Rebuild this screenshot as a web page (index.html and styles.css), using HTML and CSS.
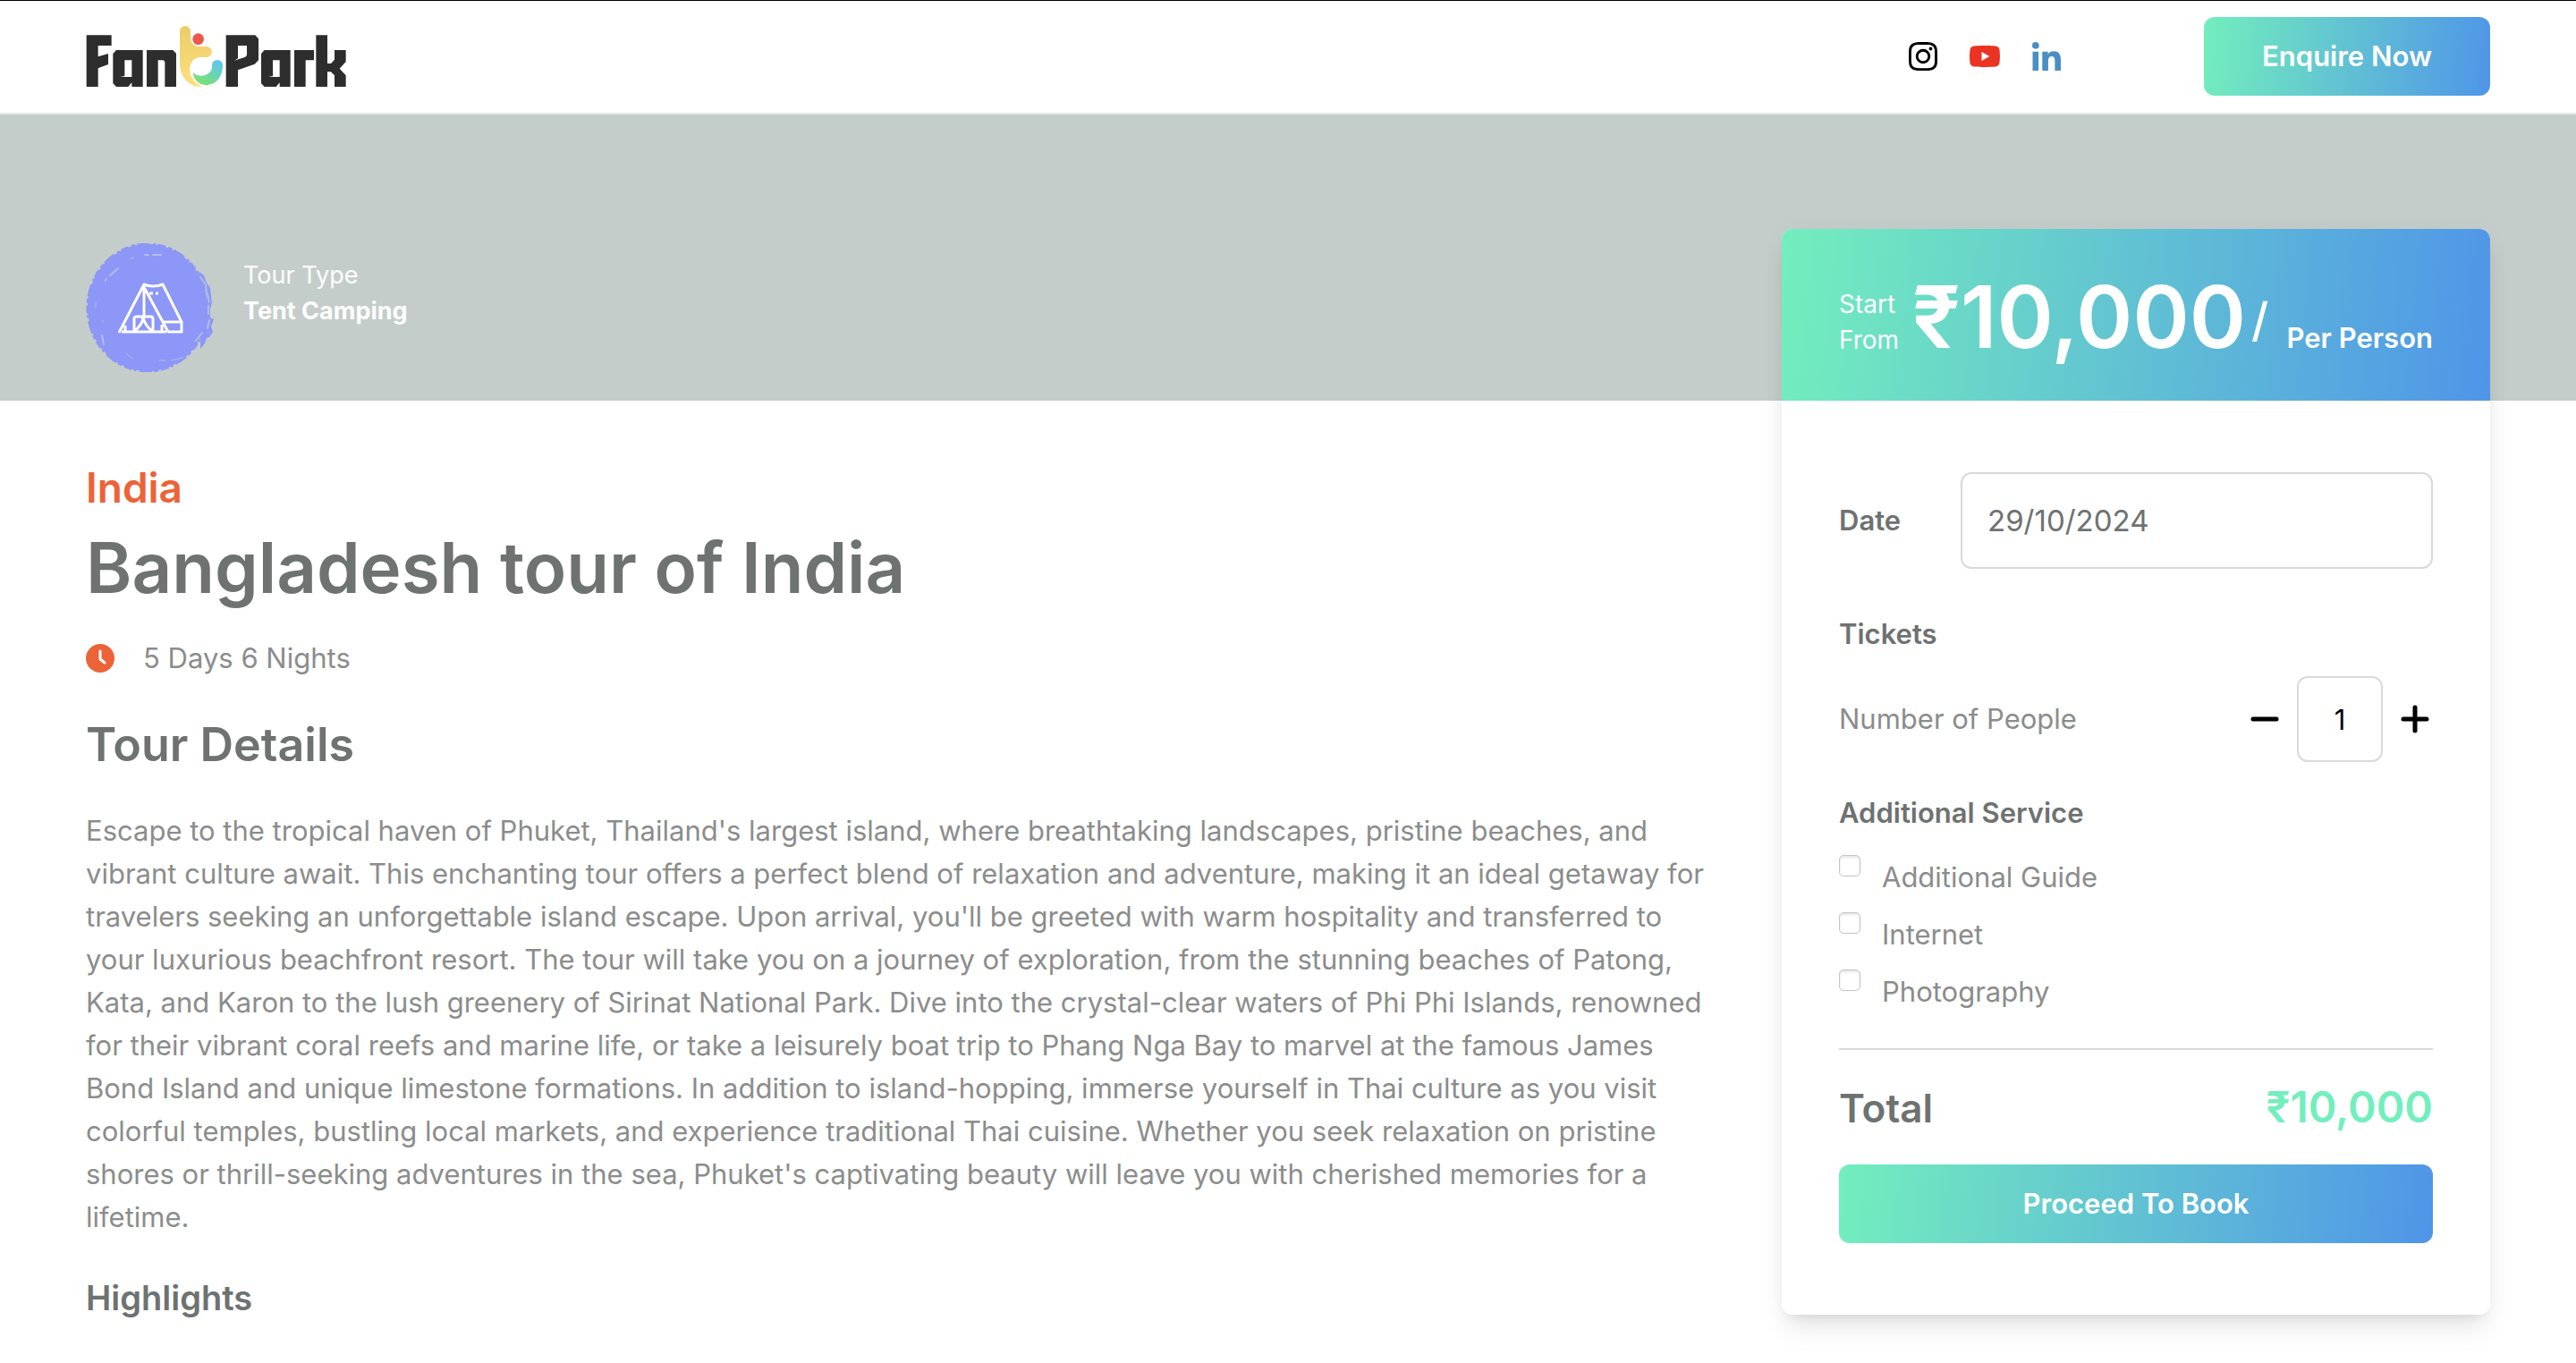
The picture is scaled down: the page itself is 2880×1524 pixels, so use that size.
FILE: index.html
```html
<!DOCTYPE html>
<html lang="en">
<head>
<meta charset="utf-8">
<meta name="viewport" content="width=device-width, initial-scale=1">
<title>Bangladesh tour of India – FantPark</title>
<link rel="stylesheet" href="styles.css">
</head>
<body>
<header class="site-header">
  <a class="logo" href="#" aria-label="FantPark home">
    <svg class="logo-mark" viewBox="48 84 876 210" role="img" aria-label="FantPark">
      <defs>
        <linearGradient id="sun" x1="0" y1="0" x2="0" y2="1"><stop offset="0" stop-color="#ebcd68"/><stop offset="1" stop-color="#fce080"/></linearGradient>
        <linearGradient id="sea" x1="1" y1="0" x2="0.3" y2="1"><stop offset="0.1" stop-color="#5cc6f0"/><stop offset="0.9" stop-color="#77e07b"/></linearGradient>
      </defs>
      <g fill="#2d2d2d" fill-rule="evenodd">
        <path d="M50 118H134V153H89V190L123 180V216L89 229V291H50Z"/>
        <path d="M150 168H239V291H202V277L190 291H150L139 280V180ZM178 202V255L163 258H202V202Z"/>
        <path d="M252 168H340L351 179V291H313V207L308 202H290V291H252Z"/>
        <path d="M518 118H616L627 130V202L614 215L558 235V291H518ZM558 153V196L546 203L583 191L588 185V153Z"/>
        <path d="M647 168H734V291H698V277L686 291H647L636 280V180ZM675 202V255L660 258H698V202Z"/>
        <path d="M747 168H813V202H785V291H747Z"/>
        <path d="M820 118H858V213H870L882 200V168H920V207L899 230L920 253V291H882V253L870 241H858V291H820Z"/>
      </g>
      <path d="M363 105a18 18 0 0 1 36 0V128C401 144 412 156 430 156H453a18 18 0 0 1 0 36H432C398 192 388 235 405 262C415 277 426 287 440 289C400 297 363 260 363 215Z" fill="url(#sun)"/>
      <circle cx="425" cy="131" r="19" fill="#ec574e"/>
      <path d="M407 242C420 258 445 257 458 247C470 239 471 232 471 219C471 196 507 196 507 219C507 258 485 285 452 285C425 285 409 265 407 242Z" fill="url(#sea)"/>
    </svg>
  </a>
  <nav class="header-actions" aria-label="Social and contact">
    <div class="social">
      <a href="#" aria-label="Instagram"><svg viewBox="0 0 448 448"><path d="M224 109a115 115 0 1 0 0 230 115 115 0 0 0 0-230zm0 190a75 75 0 1 1 0-150 75 75 0 0 1 0 150zm146-194a27 27 0 1 1-54 0 27 27 0 0 1 54 0zm76 27c-2-36-10-68-36-94S352 4 316 2c-37-2-148-2-185 0C95 4 64 12 37 38S3 96 2 132c-2 37-2 148 0 185 2 36 10 68 36 94s58 34 94 36c37 2 148 2 185 0 36-2 68-10 94-36s34-58 36-94c2-37 2-148-1-185zm-48 225a76 76 0 0 1-43 43c-29 12-99 9-131 9s-102 2-131-9a76 76 0 0 1-43-43c-12-29-9-99-9-131s-2-102 9-131a76 76 0 0 1 43-43c29-12 99-9 131-9s102-2 131 9a76 76 0 0 1 43 43c12 29 9 99 9 131s3 102-9 131z"/></svg></a>
      <a class="social-wide" href="#" aria-label="YouTube"><svg viewBox="14 16 548 480"><path fill="#ea3323" d="M550 124c-6-24-25-42-49-49-42-11-213-11-213-11S117 64 75 75c-24 7-43 25-49 49-11 43-11 132-11 132s0 90 11 133c6 23 25 41 49 48 42 11 213 11 213 11s171 0 213-11c24-7 43-25 49-48 11-43 11-133 11-133s0-89-11-132z"/><path fill="#fff" d="M232 338V175l143 81z"/></svg></a>
      <a href="#" aria-label="LinkedIn"><svg viewBox="0 0 448 448"><path fill="#4a8fc1" d="M100 448H7V149h93zM54 108A54 54 0 1 1 54 0a54 54 0 0 1 0 108zm394 340h-93V302c0-34-1-79-48-79-49 0-56 38-56 77v148h-93V149h89v41h1c13-24 43-48 88-48 94 0 112 62 112 142z"/></svg></a>
    </div>
    <button class="btn btn-enquire" type="button">Enquire Now</button>
  </nav>
</header>

<section class="hero">
  <svg class="tour-badge" viewBox="0 0 144 144" aria-hidden="true">
    <g fill="#8c97f7">
      <ellipse cx="69" cy="72" rx="67" ry="71"/>
      <path d="M127 32l5 4 3 8 4 6 1 9 1 8-2 6v10l4 2-3 8 2 6-4 6-3 1-2 6-5 6z"/>
    </g>
    <ellipse cx="69" cy="72" rx="67" ry="71" fill="none" stroke="#8c97f7" stroke-width="3" stroke-dasharray="9 3 5 2 14 4 3 2"/>
    <g fill="none" stroke="#b3bce4" stroke-width="2" stroke-linecap="round" stroke-linejoin="round">
      <path d="M66 13h4M75 13h9M27 36l9-8M22 42l1-2M128 38l6 8l1 10l3 10M134 52l3 8M137 70v9M138 86l-2 9M130 100l-7 9M18 103l2 10"/>
      <path stroke-width="1" d="M45 123l8 7M82 131h7M96 131l12-3M11 66v6M19 86v2M50 17l4-1"/>
    </g>
    <g fill="none" stroke="#fff" stroke-width="3" stroke-linejoin="round">
      <path d="M37 100L65 46Q75 50 86 46L107 88V99H92L65 49V83M40 99H90M44 92V99M54 99V84Q54 82 57 82H73Q75 82 75 85V99M54 98Q63 92 64 83Q66 92 75 99M85 88H106M85 91V98"/>
      <path d="M71 56H75M78 56H81"/>
    </g>
  </svg>
  <div class="tour-type">
    <span>Tour Type</span>
    <strong>Tent Camping</strong>
  </div>
</section>

<main class="page">
  <article class="tour">
    <p class="country">India</p>
    <h1>Bangladesh tour of India</h1>
    <p class="duration">
      <svg viewBox="0 0 32 32" aria-hidden="true"><circle cx="16" cy="16" r="16" fill="#ec6337"/><path d="M16 8V17L21 21" fill="none" stroke="#fff" stroke-width="3" stroke-linecap="round" stroke-linejoin="round"/></svg>
      5 Days 6 Nights
    </p>
    <h2>Tour Details</h2>
    <p class="description">Escape to the tropical haven of Phuket, Thailand's largest island, where breathtaking landscapes, pristine beaches, and vibrant culture await. This enchanting tour offers a perfect blend of relaxation and adventure, making it an ideal getaway for travelers seeking an unforgettable island escape. Upon arrival, you'll be greeted with warm hospitality and transferred to your luxurious beachfront resort. The tour will take you on a journey of exploration, from the stunning beaches of Patong, Kata, and Karon to the lush greenery of Sirinat National Park. Dive into the crystal-clear waters of Phi Phi Islands, renowned for their vibrant coral reefs and marine life, or take a leisurely boat trip to Phang Nga Bay to marvel at the famous James Bond Island and unique limestone formations. In addition to island-hopping, immerse yourself in Thai culture as you visit colorful temples, bustling local markets, and experience traditional Thai cuisine. Whether you seek relaxation on pristine shores or thrill-seeking adventures in the sea, Phuket's captivating beauty will leave you with cherished memories for a lifetime.</p>
    <h3>Highlights</h3>
  </article>

  <form class="booking">
    <div class="price">
      <span class="price-from">Start From</span>
      <span class="price-amount">₹10,000</span>
      <span class="price-slash">/</span>
      <span class="price-unit">Per Person</span>
    </div>
    <div class="booking-body">
      <div class="date-row">
        <label for="date">Date</label>
        <input id="date" type="text" value="29/10/2024">
      </div>
      <h4 class="tickets">Tickets</h4>
      <div class="people-row">
        <label for="people">Number of People</label>
        <div class="stepper">
          <button type="button" aria-label="Fewer people"><svg viewBox="0 0 32 32"><path d="M3 16H29"/></svg></button>
          <input id="people" type="text" inputmode="numeric" value="1">
          <button type="button" aria-label="More people"><svg viewBox="0 0 32 32"><path d="M3 16H29M16 3V29"/></svg></button>
        </div>
      </div>
      <fieldset class="services">
        <legend>Additional Service</legend>
        <label><input type="checkbox"><span>Additional Guide</span></label>
        <label><input type="checkbox"><span>Internet</span></label>
        <label><input type="checkbox"><span>Photography</span></label>
      </fieldset>
      <div class="total">
        <span>Total</span>
        <output>₹10,000</output>
      </div>
      <button class="btn btn-book" type="submit">Proceed To Book</button>
    </div>
  </form>
</main>
</body>
</html>
```
FILE: styles.css
```css
:root {
  --ink: #6e7271;
  --muted: #8b8d8c;
  --line: #d9d9d9;
  --mint: #73eebd;
  --blue: #4f95e8;
  --gutter: 96px;
}

* { box-sizing: border-box; margin: 0; }

body {
  background: #fff;
  color: var(--muted);
  font: 400 31px/48px Inter, sans-serif;
  overflow-x: hidden;
}

a { color: inherit; text-decoration: none; }
svg { display: block; }
button, input { font: inherit; }
button { border: 0; background: none; padding: 0; cursor: pointer; }

.site-header {
  display: flex;
  align-items: center;
  justify-content: space-between;
  height: 128px;
  padding: 0 var(--gutter);
  border-bottom: 2px solid #e5e7eb;
  box-shadow: inset 0 1px #000;
}
.logo-mark { width: 292px; height: 70px; }
.header-actions { display: flex; align-items: center; gap: 160px; }
.social { display: flex; align-items: center; gap: 36px; }
.social svg { width: 32px; height: 32px; }
.social .social-wide svg { width: 34px; }

.btn {
  height: 88px;
  border-radius: 12px;
  background: linear-gradient(96deg, var(--mint), var(--blue));
  color: #fff;
  font-weight: 600;
}
.btn-enquire { width: 320px; }

.hero {
  display: flex;
  gap: 32px;
  height: 320px;
  padding: 144px var(--gutter) 0;
  background: #c5cdca;
  color: #fff;
}
.tour-badge { width: 144px; height: 144px; }
.tour-type {
  display: flex;
  flex-direction: column;
  padding-top: 16px;
  font-size: 27px;
  line-height: 40px;
}
.tour-type strong { font-weight: 700; }

.page {
  display: grid;
  grid-template-columns: 1fr 792px;
  align-items: start;
  gap: 72px;
  padding: 0 var(--gutter);
}

.tour { padding-top: 65px; }
h1, h2, h3, h4, .country { color: var(--ink); font-weight: 600; }
.country { color: #ec6337; font-size: 46px; line-height: 64px; }
h1 { font-size: 78px; line-height: 96px; margin-top: 10px; }
.duration { display: flex; align-items: center; gap: 32px; margin-top: 29px; }
.duration svg { width: 32px; height: 32px; }
h2 { font-size: 52px; line-height: 72px; margin-top: 37px; }
.description { margin-top: 36px; }
h3 { font-size: 38px; line-height: 56px; margin-top: 38px; }

.booking {
  margin: -192px 0 48px;
  border-radius: 12px;
  background: #fff;
  box-shadow: 0 20px 30px -6px rgb(0 0 0 / 10%), 0 8px 12px -8px rgb(0 0 0 / 10%), 0 0 30px rgb(0 0 0 / 3%);
}
.price {
  display: flex;
  align-items: baseline;
  height: 192px;
  padding: 50px 64px 0;
  border-radius: 12px 12px 0 0;
  background: linear-gradient(96deg, var(--mint), var(--blue));
  color: #fff;
  line-height: 96px;
}
.price-from { align-self: flex-start; width: 82px; padding-top: 14px; font-size: 28px; line-height: 40px; }
.price-amount { font-size: 96px; font-weight: 600; }
.price-slash { align-self: flex-start; margin-left: 6px; font-size: 52px; font-weight: 500; line-height: 104px; }
.price-unit { margin-left: auto; font-weight: 600; }

.booking-body { padding: 80px 64px; }
.date-row { display: flex; align-items: center; justify-content: space-between; }
.date-row label { color: var(--ink); font-weight: 600; }
.date-row input {
  width: 528px;
  height: 108px;
  padding: 0 28px;
  border: 2px solid var(--line);
  border-radius: 12px;
  background: #fff;
  color: var(--ink);
  font-size: 33px;
}
.tickets { margin-top: 49px; font-size: 31px; }
.people-row { display: flex; align-items: center; justify-content: space-between; margin-top: 23px; }
.stepper { display: flex; align-items: center; gap: 20px; padding-right: 4px; }
.stepper input {
  width: 96px;
  height: 96px;
  padding: 0;
  border: 2px solid var(--line);
  border-radius: 12px;
  color: #000;
  text-align: center;
}
.stepper svg { width: 32px; height: 32px; stroke: #000; stroke-width: 5; stroke-linecap: round; }

.services { margin-top: 33px; padding: 0; border: 0; }
.services legend { padding: 0; margin-bottom: 23px; color: var(--ink); font-weight: 600; }
.services label { display: flex; align-items: flex-start; gap: 24px; height: 64px; }
.services input {
  appearance: none;
  width: 24px;
  height: 24px;
  margin: 0;
  border: 1px solid #c4c4c4;
  border-radius: 5px;
  background: #fff;
  box-shadow: inset 0 2px 3px rgb(0 0 0 / 10%);
}
.services span { line-height: 50px; }

.total {
  display: flex;
  align-items: baseline;
  justify-content: space-between;
  height: 98px;
  margin-top: 24px;
  padding-top: 32px;
  border-top: 2px solid var(--line);
  color: var(--ink);
  font-size: 44px;
  font-weight: 600;
  line-height: 64px;
}
.total output { color: var(--mint); font-size: 48px; }
.btn-book { width: 100%; margin-top: 32px; }
```
